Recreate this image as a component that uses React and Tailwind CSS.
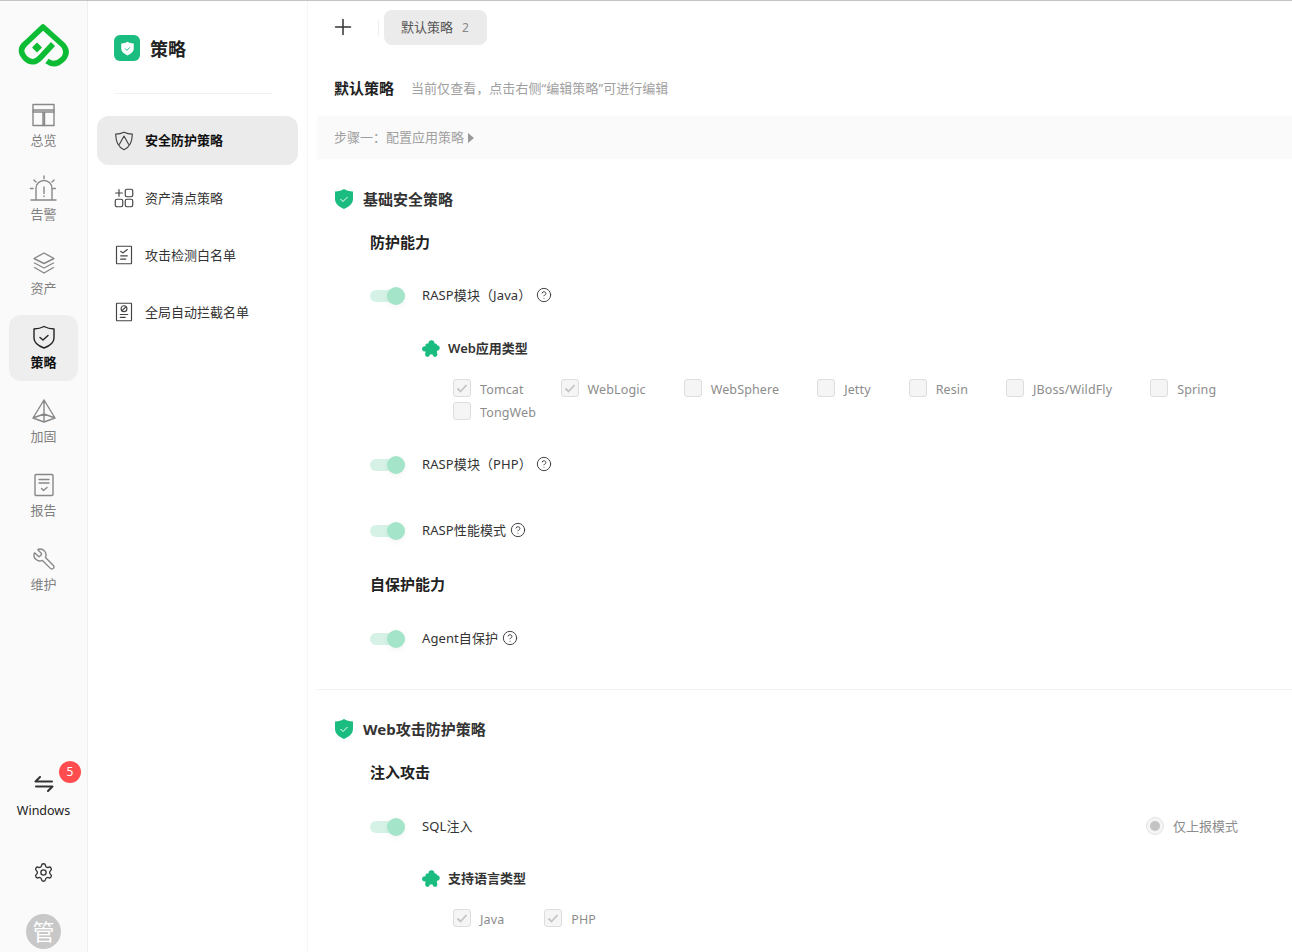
import React from "react";
import { CircleHelp, Settings, Wrench } from "lucide-react";

const Ico = ({ children, className = "w-6 h-6" }) => (
  <svg viewBox="0 0 24 24" fill="none" stroke="currentColor" strokeWidth="1.4" strokeLinecap="round" strokeLinejoin="round" className={`overflow-visible ${className}`}>
    {children}
  </svg>
);

const Logo = () => (
  <svg viewBox="18 21 52 46" className="w-[52px] h-[46px]" fill="none" stroke="#0cbc34" strokeWidth="5.6" strokeLinejoin="round" strokeLinecap="butt">
    <path d="M53 43 L41 56 Q33 65 25 57 Q18 49 25 43 L43 26 L63 44 Q69 51 63 58 Q55 66 47 60" />
    <path d="M37 42.5 L41 46.5 L37 50.5 L33 46.5 Z" fill="#0cbc34" strokeWidth="1.5" />
  </svg>
);

const railItems = [
  ["总览", <Ico><rect x="1" y="1.500" width="21" height="21" /><path d="M1 7h21M1 9h21M11 9v13.500M12.500 9v13.500" /></Ico>],
  ["告警", <Ico><path d="M-1 23h25M4 23V11.500a8 8 0 0 1 16 0V23M12 10v6.500M12 19v.5M12 -1v2.500M2 3l2 2M22 3l-2 2M-1.500 11.500h2.500M23.500 11.500h-2.500" /></Ico>],
  ["资产", <Ico><path d="M12 2 22 7.500 12 12.500 2 7.500ZM2.500 12 12 17 21.500 12M2.500 16.500 12 22 21.500 16.500" /></Ico>],
  ["策略", <Ico><path d="M12 1.500c3 1.600 6 2.300 10 2.500v9c0 4.500-4 7.800-10 10-6-2.200-10-5.500-10-10V4c4-.2 7-.9 10-2.500ZM8 12.500l3 2.500 5-4.500" /></Ico>],
  ["加固", <Ico><path d="M12 1 23 19l-11 4-11-4ZM12 1v22M1 19l11-4 11 4" /></Ico>],
  ["报告", <Ico><rect x="3" y="1.500" width="18" height="21" rx="1" /><path d="M7 6.500h10M7 10h10M9.500 15.500l2 2 3.500-3" /></Ico>],
  ["维护", <Wrench className="w-6 h-6" strokeWidth={1.4} style={{ transform: "scaleX(-1)" }} />],
];

const Rail = () => (
  <aside className="w-[88px] shrink-0 h-full bg-[#fafafa] border-r border-[#eeeeee] flex flex-col items-center">
    <div className="h-[92px] pt-[21px] flex justify-center w-full shrink-0">
      <Logo />
    </div>
    <nav className="flex flex-col gap-2 w-full items-center">
      {railItems.map(([label, icon], i) => {
        const active = label === "策略";
        return (
          <div key={i} className={`w-[69px] h-[66px] rounded-xl flex flex-col items-center pt-[10px] ${active ? "bg-[#eeeeee] text-[#222222]" : "text-[#888888]"}`}>
            {icon}
            <span className={`mt-[3px] text-[13px] leading-5 ${active ? "font-bold text-[#111111]" : "text-[#808080]"}`}>{label}</span>
          </div>
        );
      })}
    </nav>
    <div className="flex-1" />
    <div className="relative w-full flex flex-col items-center text-[#333333]">
      <svg viewBox="0 0 20 16" className="w-[20px] h-[16px]" fill="none" stroke="#333333" strokeWidth="2" strokeLinecap="round" strokeLinejoin="round">
        <path d="M18 5.500H1.500L6 1M2 10.500h16.500L14 15" />
      </svg>
      <span className="mt-[10px] text-[12.500px] leading-[18px] text-[#222222]">Windows</span>
      <span className="absolute left-[59px] -top-[15px] w-[22px] h-[22px] rounded-full bg-[#ff4d4f] text-white text-[12px] flex items-center justify-center">5</span>
    </div>
    <div className="mt-[42px] text-[#333333]">
      <Settings className="w-[21px] h-[21px]" strokeWidth={1.500} />
    </div>
    <div className="mt-[31px] mb-[3px] w-[35px] h-[35px] rounded-full bg-[#c8c8c8] text-white text-[22px] flex items-center justify-center shrink-0">管</div>
  </aside>
);

const subItems = [
  ["安全防护策略", <Ico className="w-[20px] h-[20px]"><path d="M12 1.500c3 1.500 6 2.200 10 2.300-.2 8.500-3 15.500-10 18.700C5 19.300 2.200 12.300 2 3.800c4-.1 7-.8 10-2.300ZM6.500 16 12 6l5.500 10" /></Ico>],
  ["资产清点策略", <Ico className="w-[20px] h-[20px]"><path d="M2 6h8M6 2v8" /><rect x="13.500" y="1.500" width="9" height="9" rx="2" /><rect x="1.500" y="13.500" width="9" height="9" rx="2" /><rect x="13.500" y="13.500" width="9" height="9" rx="2" /></Ico>],
  ["攻击检测白名单", <Ico className="w-[20px] h-[20px]"><rect x="3" y="1.500" width="18" height="21" rx="0.500" /><path d="M8 7.500l2.500 2L16 5.500M8 13h8M8 17h6" /></Ico>],
  ["全局自动拦截名单", <Ico className="w-[20px] h-[20px]"><rect x="3" y="1.500" width="18" height="21" rx="0.500" /><circle cx="12" cy="8" r="3.500" /><path d="M10 10l4-4M7.500 15h9M7.500 18.500h6" /></Ico>],
];

const SubNav = () => (
  <aside className="w-[220px] shrink-0 h-full border-r border-[#f5f5f5] bg-white px-[9px]">
    <div className="h-[92px] px-[17px] pt-[33px]">
      <div className="flex items-center gap-[10px]">
        <div className="w-[26px] h-[26px] rounded-md bg-[#1abc7f] flex items-center justify-center">
          <svg viewBox="0 0 24 24" className="w-[15px] h-[15px]"><path d="M12 1c3 1.800 6 2.600 10 2.800v8.700c0 4.700-4 8-10 10.500C6 20.500 2 17.200 2 12.500V3.800C6 3.600 9 2.800 12 1Z" fill="#ffffff" /><path d="M8 12l3 3 5-5" fill="none" stroke="#1abc7f" strokeWidth="1.600" /></svg>
        </div>
        <span className="pt-[2px] text-[18px] leading-[26px] font-bold text-[#222222]">策略</span>
      </div>
    </div>
    <div className="mx-[17px] w-[158px] h-px bg-[#f1f1f1]" />
    <div className="mt-[22px] flex flex-col gap-2">
      {subItems.map(([label, icon], i) => (
        <div key={i} className={`h-[49px] rounded-xl px-[17px] flex items-center gap-[11px] text-[13px] ${i === 0 ? "bg-[#ebebeb] text-[#111111] font-bold" : "text-[#333333]"}`}>
          <span className="text-[#444444] shrink-0">{icon}</span>
          <span className={i === 0 ? "" : "pt-[2px]"}>{label}</span>
        </div>
      ))}
    </div>
  </aside>
);

const Toggle = () => (
  <div className="relative w-[35px] h-[18px] shrink-0 flex items-center translate-y-px">
    <div className="w-full h-3 rounded-full bg-[#d6f2e6]" />
    <div className="absolute right-0 top-0 w-[18px] h-[18px] rounded-full bg-[#a4e4c9] shadow-[0_2px_6px_rgba(0,0,0,0.05)]" />
  </div>
);

const Help = ({ className = "ml-[5px]" }) => <CircleHelp className={`w-4 h-4 text-[#444444] ${className}`} strokeWidth={1.500} />;

const ToggleRow = ({ label, className = "", children }) => (
  <div className={`h-5 flex items-center pl-[53px] ${className}`}>
    <Toggle />
    <span className="ml-[17px] pt-[2px] text-[13px] tracking-[0.1px] text-[#333333]">{label}</span>
    {children}
  </div>
);

const Shield = () => (
  <svg viewBox="0 0 18 20" className="w-[18px] h-[20px] shrink-0">
    <path d="M9 0c2.500 1.500 5 2.300 9 2.500V10c0 4.500-3.500 7.500-9 10C3.500 17.500 0 14.500 0 10V2.500C4 2.300 6.500 1.500 9 0Z" fill="#1abc7f" />
    <path d="M5.500 10l2.500 2.500 4.500-4.500" fill="none" stroke="#ffffff" strokeWidth="1" />
  </svg>
);

const Heading = ({ children, className = "" }) => (
  <div className={`h-6 flex items-center gap-[10px] pl-[18px] ${className}`}>
    <Shield />
    <span className="text-[15px] font-bold text-[#333333]">{children}</span>
  </div>
);

const Sub = ({ children, className = "" }) => (
  <div className={`h-5 pl-[53px] flex items-center text-[15px] font-bold text-[#222222] ${className}`}>{children}</div>
);

const Puzzle = () => (
  <svg viewBox="0 0 18 17" className="w-[18px] h-[17px] shrink-0" fill="#1abc7f">
    <rect x="3.500" y="3.500" width="11.500" height="11" rx="1.500" />
    <circle cx="9.500" cy="3.200" r="3" />
    <circle cx="2.700" cy="8.800" r="2.600" />
    <circle cx="15" cy="8" r="2.700" />
    <circle cx="5.500" cy="14.500" r="2.400" />
    <circle cx="13" cy="14.500" r="2.400" />
    <circle cx="9.300" cy="16.600" r="1.900" fill="#ffffff" />
  </svg>
);

const TypeTitle = ({ children, className = "" }) => (
  <div className={`h-5 pl-[105px] flex items-center gap-2 text-[13px] font-semibold text-[#333333] ${className}`}>
    <Puzzle />
    <span className="pt-[2px]">{children}</span>
  </div>
);

const Check = ({ label, checked, className = "mr-[38px]" }) => (
  <div className={`flex items-center h-[18px] ${className}`}>
    <span className="w-[18px] h-[18px] rounded-[3px] border border-[#dddddd] bg-[#f5f5f5] flex items-center justify-center shrink-0">
      {checked && (
        <svg viewBox="0 0 12 12" className="w-3 h-3" fill="none" stroke="#c4c4c4" strokeWidth="1.800"><path d="M1.500 6.500 4.500 9.500 10.500 3" /></svg>
      )}
    </span>
    <span className="ml-[9px] text-[12.500px] leading-[18px] tracking-[0.12px] text-[#8c8c8c] whitespace-nowrap pt-[4px]">{label}</span>
  </div>
);

const Main = () => (
  <main className="flex-1 min-w-0 h-full pl-[9px] overflow-hidden bg-white">
    <div className="mt-[9px] h-[35px] flex items-center pl-[17px]">
      <svg viewBox="0 0 18 18" className="w-[18px] h-[18px] -translate-y-px" fill="none" stroke="#333333" strokeWidth="1.500" strokeLinecap="round"><path d="M9 1.500v15M1.500 9h15" /></svg>
      <div className="ml-[26px] w-px h-4 bg-[#eeeeee]" />
      <div className="ml-[5px] w-[103px] h-[35px] rounded-lg bg-[#ebebeb] flex items-center pl-[17px] text-[13px] text-[#555555]">
        <span>默认策略</span>
        <span className="ml-[9px] text-[#888888] text-[12px]">2</span>
      </div>
    </div>
    <div className="mt-[31px] h-6 flex items-center pl-[17px]">
      <span className="text-[15px] font-bold text-[#222222]">默认策略</span>
      <span className="ml-[17px] pt-[2px] text-[13px] tracking-[0.05px] text-[#a0a0a0]">当前仅查看，点击右侧“编辑策略”可进行编辑</span>
    </div>
    <div className="mt-4 h-[43px] bg-[#fafafa] flex items-center pl-[17px] text-[13px] text-[#a0a0a0]">
      <span>步骤一：配置应用策略</span>
      <svg viewBox="0 0 6 10" className="ml-[4px] w-[6px] h-[10px]"><path d="M0 0l6 5-6 5Z" fill="#999999" /></svg>
    </div>

    <Heading className="mt-[28px]">基础安全策略</Heading>
    <Sub className="mt-[21px]">防护能力</Sub>
    <ToggleRow label="RASP模块（Java）" className="mt-[33px]"><Help className="ml-[5px]" /></ToggleRow>
    <TypeTitle className="mt-[33px]">Web应用类型</TypeTitle>
    <div className="mt-[21px] pl-[136px] flex flex-wrap gap-y-[5px] pr-2">
      <Check label="Tomcat" checked className="mr-[37px]" />
      <Check label="WebLogic" checked />
      <Check label="WebSphere" />
      <Check label="Jetty" />
      <Check label="Resin" />
      <Check label="JBoss/WildFly" />
      <Check label="Spring" />
      <Check label="TongWeb" />
    </div>
    <ToggleRow label="RASP模块（PHP）" className="mt-[34px]"><Help className="ml-[4px]" /></ToggleRow>
    <ToggleRow label="RASP性能模式" className="mt-[46px]"><Help className="ml-[4px]" /></ToggleRow>
    <Sub className="mt-[34px]">自保护能力</Sub>
    <ToggleRow label="Agent自保护" className="mt-[34px]"><Help className="ml-[4px]" /></ToggleRow>
    <div className="mt-[41px] h-px bg-[#f3f3f3]" />

    <Heading className="mt-[27px]">Web攻击防护策略</Heading>
    <Sub className="mt-[21px]">注入攻击</Sub>
    <ToggleRow label="SQL注入" className="mt-[34px]">
      <div className="ml-auto mr-[54px] flex items-center">
        <span className="w-[18px] h-[18px] rounded-full border border-[#e3e3e3] bg-[#f5f5f5] flex items-center justify-center">
          <span className="w-[10px] h-[10px] rounded-full bg-[#c4c4c4]" />
        </span>
        <span className="ml-[9px] pt-[2px] text-[13px] text-[#8c8c8c]">仅上报模式</span>
      </div>
    </ToggleRow>
    <TypeTitle className="mt-[32px]">支持语言类型</TypeTitle>
    <div className="mt-[21px] pl-[136px] flex">
      <Check label="Java" checked className="mr-[40px]" />
      <Check label="PHP" checked />
    </div>
  </main>
);

export default function App() {
  return (
    <div className="w-[1292px] h-[952px] overflow-hidden flex border-t border-[#c4c4c4] bg-white" style={{ fontFamily: '"Noto Sans", "Noto Sans CJK SC", sans-serif' }}>
      <Rail />
      <SubNav />
      <Main />
    </div>
  );
}
